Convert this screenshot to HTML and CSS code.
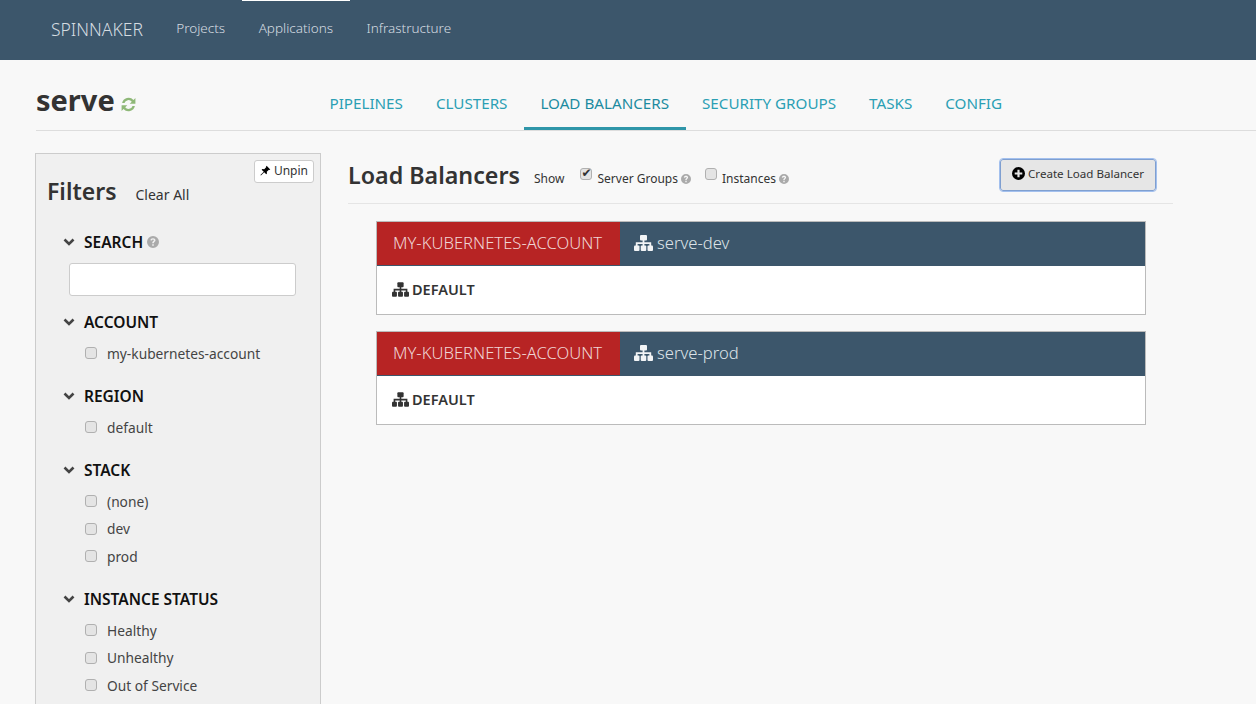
FILE: index.html
```html
<!DOCTYPE html>
<html lang="en">
<head>
    <meta charset="UTF-8">
    <title>Spinnaker - serve</title>
    <link rel="stylesheet" href="styles.css">
</head>
<body>
    <svg class="defs" width="0" height="0">
        <symbol id="sitemap" viewBox="0 0 19 16">
            <rect x="6" y="0" width="7" height="5.500" rx="1"/>
            <rect x="0" y="10.500" width="5.500" height="5.500" rx="1"/>
            <rect x="6.750" y="10.500" width="5.500" height="5.500" rx="1"/>
            <rect x="13.500" y="10.500" width="5.500" height="5.500" rx="1"/>
            <path d="M8.600 5h1.800v2.200H17.200V11h-1.800V9H10.400v2H8.600V9H3.600v2H1.800V7.200h6.800z"/>
        </symbol>
        <symbol id="help" viewBox="0 0 12 12">
            <path fill-rule="evenodd" d="M6 0a6 6 0 1 1 0 12A6 6 0 0 1 6 0zM5.200 8.200v1.600h1.600V8.200zM6 2.200c-1.500 0-2.500.8-2.600 2.100l1.500.3c.1-.6.5-1 1.100-1 .5 0 .9.3.9.7 0 .9-1.700 1-1.700 2.900h1.600c0-1.300 1.700-1.400 1.700-3 0-1.200-1.100-2-2.500-2z"/>
        </symbol>
        <symbol id="chevron" viewBox="0 0 12 8">
            <path d="M1.500 1.500 6 6l4.500-4.500" fill="none" stroke="currentColor" stroke-width="2.600"/>
        </symbol>
    </svg>

    <nav class="topbar">
        <a class="brand">SPINNAKER</a>
        <a class="topbar-link">Projects</a>
        <a class="topbar-link active">Applications</a>
        <a class="topbar-link">Infrastructure</a>
    </nav>

    <header class="app-header">
        <h1 class="app-name">serve
            <svg class="refresh" viewBox="0 0 16 16">
                <path d="M2 6.600A6.200 6.200 0 0 1 12.700 3.700L14.500 1.900V7.300H9.100L11.100 5.300A4 4 0 0 0 4.200 6.600z"/>
                <path d="M14 9.400A6.200 6.200 0 0 1 3.300 12.300L1.500 14.100V8.700H6.900L4.900 10.700A4 4 0 0 0 11.800 9.400z"/>
            </svg>
        </h1>
        <ul class="tabs">
            <li class="tab">PIPELINES</li>
            <li class="tab">CLUSTERS</li>
            <li class="tab active">LOAD BALANCERS</li>
            <li class="tab">SECURITY GROUPS</li>
            <li class="tab">TASKS</li>
            <li class="tab">CONFIG</li>
        </ul>
    </header>

    <div class="content">
        <aside class="filters">
            <button class="btn-unpin">
                <svg class="pin" viewBox="0 0 12 12"><path d="M7.200.8l4 4-.9.6-.6-.3-2.300 2.300.2 2-.8.8-2.200-2.300L1 11.500l-.5-.5 3.600-3.600-2.300-2.200.8-.8 2 .2 2.300-2.300-.3-.6z"/></svg>
                Unpin
            </button>
            <div class="filters-title">
                <h3>Filters</h3>
                <a class="clear-all">Clear All</a>
            </div>

            <div class="filter-group search-group">
                <h4 class="filter-heading search-heading"><svg class="chevron"><use href="#chevron"/></svg>SEARCH <svg class="help"><use href="#help"/></svg></h4>
                <input class="search-box" type="text">
            </div>

            <div class="filter-group">
                <h4 class="filter-heading"><svg class="chevron"><use href="#chevron"/></svg>ACCOUNT</h4>
                <label class="filter-item"><input type="checkbox">my-kubernetes-account</label>
            </div>

            <div class="filter-group">
                <h4 class="filter-heading"><svg class="chevron"><use href="#chevron"/></svg>REGION</h4>
                <label class="filter-item"><input type="checkbox">default</label>
            </div>

            <div class="filter-group">
                <h4 class="filter-heading"><svg class="chevron"><use href="#chevron"/></svg>STACK</h4>
                <label class="filter-item"><input type="checkbox">(none)</label>
                <label class="filter-item"><input type="checkbox">dev</label>
                <label class="filter-item"><input type="checkbox">prod</label>
            </div>

            <div class="filter-group">
                <h4 class="filter-heading"><svg class="chevron"><use href="#chevron"/></svg>INSTANCE STATUS</h4>
                <label class="filter-item"><input type="checkbox">Healthy</label>
                <label class="filter-item"><input type="checkbox">Unhealthy</label>
                <label class="filter-item"><input type="checkbox">Out of Service</label>
            </div>
        </aside>

        <main class="main">
            <div class="main-header">
                <h2>Load Balancers</h2>
                <span class="show-label">Show</span>
                <label class="show-option"><input type="checkbox" checked>Server Groups <svg class="help small"><use href="#help"/></svg></label>
                <label class="show-option"><input type="checkbox">Instances <svg class="help small"><use href="#help"/></svg></label>
                <button class="btn-create">
                    <svg class="plus" viewBox="0 0 12 12"><path fill-rule="evenodd" d="M6 0a6 6 0 1 1 0 12A6 6 0 0 1 6 0zM5 2.500V5H2.500v2H5v2.500h2V7h2.500V5H7V2.500z"/></svg>
                    Create Load Balancer
                </button>
            </div>

            <section class="lb-card">
                <div class="lb-head">
                    <span class="lb-account">MY-KUBERNETES-ACCOUNT</span>
                    <span class="lb-name"><svg class="sitemap"><use href="#sitemap"/></svg>serve-dev</span>
                </div>
                <div class="lb-body"><svg class="sitemap"><use href="#sitemap"/></svg>DEFAULT</div>
            </section>

            <section class="lb-card">
                <div class="lb-head">
                    <span class="lb-account">MY-KUBERNETES-ACCOUNT</span>
                    <span class="lb-name"><svg class="sitemap"><use href="#sitemap"/></svg>serve-prod</span>
                </div>
                <div class="lb-body"><svg class="sitemap"><use href="#sitemap"/></svg>DEFAULT</div>
            </section>
        </main>
    </div>
</body>
</html>
```

FILE: styles.css
```css
html, body {
    height: 704px;
    overflow: hidden;
}

body {
    margin: 0;
    background: #f8f8f8;
    color: #333;
    font-family: "Noto Sans", sans-serif;
    font-size: 13px;
}

.defs {
    position: absolute;
}

.topbar {
    display: flex;
    height: 60px;
    padding-left: 35px;
    background: #3c566b;
    color: #d5dce1;
}

.brand {
    padding: 0 16.500px 0 16px;
    font-size: 17.500px;
    font-weight: 300;
    line-height: 58px;
}

.topbar-link {
    padding: 0 16.750px;
    border-top: 1px solid transparent;
    font-size: 13.500px;
    font-weight: 300;
    line-height: 55px;
}

.topbar-link.active {
    border-top-color: #fff;
}

.app-header {
    display: flex;
    height: 70px;
    margin-left: 36px;
    border-bottom: 1px solid #ddd;
}

.app-name {
    width: 277px;
    margin: 0;
    padding-top: 22px;
    font-size: 29px;
    line-height: 36px;
}

.refresh {
    width: 17px;
    height: 17px;
    margin-left: -2px;
    vertical-align: -2px;
    fill: #8fb878;
}

.tabs {
    display: flex;
    margin: 0;
    padding: 0;
    list-style: none;
}

.tab {
    padding: 33px 16.500px 0;
    color: #2b9fb4;
    font-size: 15.200px;
    line-height: 20px;
}

.tab.active {
    height: 34px;
    border-bottom: 3px solid #2f96a9;
    color: #1c8ba0;
}

.content {
    display: flex;
    padding: 22px 0 0 35px;
}

.filters {
    position: relative;
    box-sizing: border-box;
    width: 286px;
    height: 560px;
    padding: 0 24px 0 27px;
    border: 1px solid #ccc;
    background: #f0f0f0;
}

.btn-unpin {
    position: absolute;
    top: 6px;
    right: 6px;
    display: flex;
    align-items: center;
    gap: 3px;
    height: 23px;
    padding: 0 5px 2px;
    border: 1px solid #ccc;
    border-radius: 3px;
    background: #fff;
    color: #333;
    font: 12px "Noto Sans", sans-serif;
}

.pin {
    width: 11px;
    height: 11px;
}

.filters-title {
    display: flex;
    align-items: baseline;
    gap: 19px;
    margin: 21px 0 23px -16px;
}

.filters-title h3 {
    margin: 0;
    font-size: 23px;
    font-weight: 600;
    line-height: 32px;
}

.clear-all {
    font-size: 14px;
}

.filter-group {
    margin-bottom: 16.500px;
}

.search-group {
    margin-bottom: 14px;
}

.filter-heading {
    display: flex;
    align-items: center;
    height: 24px;
    margin: 0 0 6px;
    color: #111;
    font-size: 15.500px;
    font-weight: 600;
}

.search-heading {
    margin-bottom: 9px;
}

.chevron {
    width: 12px;
    height: 8px;
    margin-right: 9px;
    color: #444;
}

.help {
    width: 12px;
    height: 12px;
    margin-left: 4px;
    fill: #aaa;
}

.help.small {
    width: 10px;
    height: 10px;
    margin-left: 0;
}

.search-box {
    display: block;
    box-sizing: border-box;
    width: 227px;
    height: 33px;
    margin: 0 0 0 6px;
    border: 1px solid #ccc;
    border-radius: 3px;
    background: #fff;
}

.filter-item {
    display: flex;
    align-items: center;
    box-sizing: border-box;
    height: 27.500px;
    margin-left: 22px;
    padding-bottom: 1px;
    color: #444;
    font-size: 13.750px;
}

input[type="checkbox"] {
    position: relative;
    flex: none;
    width: 12px;
    height: 12px;
    margin: 0 10px 0 0;
    appearance: none;
    border: 1px solid #b0b0b0;
    border-radius: 3px;
    background: #e4e4e4;
}

input[type="checkbox"]:checked::after {
    content: "\2714";
    position: absolute;
    top: -3px;
    left: 0;
    color: #333;
    font: 12px "DejaVu Sans", sans-serif;
}

.main {
    flex: none;
    width: 825px;
    margin-left: 27px;
}

.main-header {
    display: flex;
    align-items: center;
    box-sizing: border-box;
    height: 51px;
    margin-bottom: 17px;
    padding-bottom: 7px;
    border-bottom: 1px solid #e5e5e5;
    white-space: nowrap;
}

.main-header h2 {
    margin: 0 14px 0 0;
    font-size: 23.250px;
    font-weight: 600;
}

.show-label {
    margin-right: 16px;
    padding-top: 8px;
    font-size: 12px;
}

.show-option {
    display: flex;
    align-items: center;
    gap: 3px;
    margin-right: 14px;
    padding-top: 8px;
    font-size: 12px;
}

.show-option input[type="checkbox"] {
    margin-top: -9px;
    margin-right: 2px;
}

.btn-create {
    display: flex;
    align-items: center;
    gap: 3px;
    height: 32px;
    margin-left: auto;
    margin-right: 17px;
    padding: 0 11px 2px;
    border: 1px solid #7f9fd0;
    border-radius: 3px;
    outline: 1px solid #a3c0ee;
    background: #e6e6e6;
    color: #333;
    font: 11.600px "Noto Sans", sans-serif;
}

.plus {
    width: 13px;
    height: 13px;
}

.lb-card {
    box-sizing: border-box;
    width: 770px;
    height: 94px;
    margin: 0 0 16px 28px;
    border: 1px solid #bbb;
    background: #fff;
}

.lb-head {
    display: flex;
    height: 43px;
    background: #3c566b;
    color: #dde3e7;
    font-size: 16.600px;
    font-weight: 300;
    line-height: 42px;
    white-space: nowrap;
}

.lb-account {
    box-sizing: border-box;
    width: 243px;
    padding-left: 16px;
    background: #b72424;
    color: #f0d5d5;
}

.lb-name {
    display: flex;
    align-items: center;
    gap: 4px;
    padding-bottom: 2px;
    padding-left: 14px;
}

.sitemap {
    width: 19px;
    height: 16px;
    fill: #f2f4f6;
}

.lb-body {
    display: flex;
    align-items: center;
    gap: 3px;
    box-sizing: border-box;
    height: 49px;
    padding-bottom: 2px;
    padding-left: 15px;
    border-top: 1px solid #3c566b;
    font-size: 14.500px;
    font-weight: 600;
}

.lb-body .sitemap {
    width: 17px;
    height: 15px;
    fill: #333;
}
```
